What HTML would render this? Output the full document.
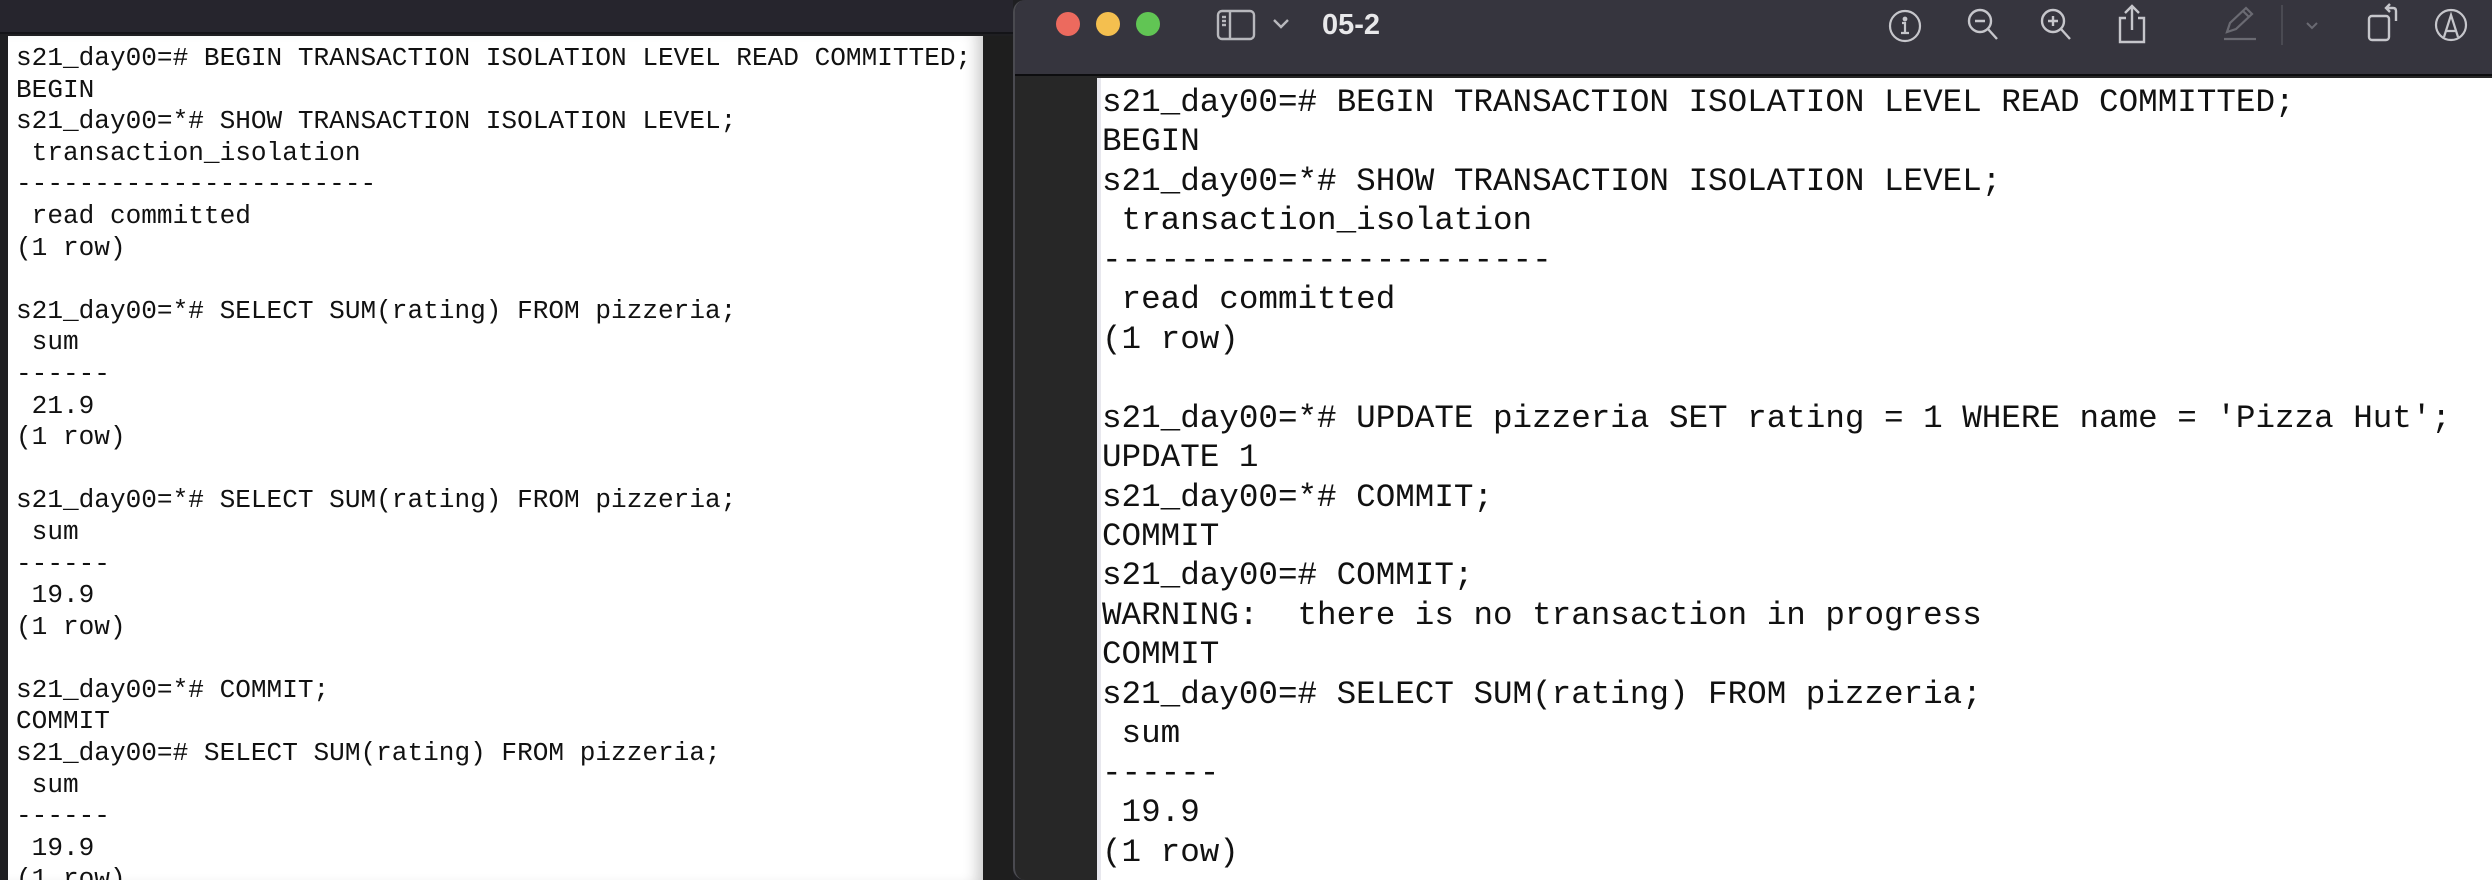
<!DOCTYPE html>
<html><head><meta charset="utf-8"><style>
*{margin:0;padding:0;box-sizing:border-box}
html,body{width:2492px;height:880px;overflow:hidden}
body{background:#1f1f22;position:relative;font-family:"Liberation Mono",monospace}
#ltop{position:absolute;left:0;top:0;width:1013px;height:34px;background:#26252d;border-bottom:2px solid #141418}
#lpan{position:absolute;left:8px;top:36px;width:975px;height:844px;background:#fff;box-shadow:inset -14px 0 14px -8px #ccc;overflow:hidden}
#lgap{position:absolute;left:983px;top:36px;width:30px;height:844px;background:#1e1e1e}
pre{font-family:"Liberation Mono",monospace;color:#111;white-space:pre}
#lt{position:absolute;left:8px;top:7px;font-size:26.1px;line-height:31.6px}
#win{position:absolute;left:1013px;top:0;width:1479px;height:880px;background:#272727;border-left:2px solid #4a4a50;border-radius:12px 0 0 12px;overflow:hidden}
#tb{position:absolute;left:0;top:0;width:100%;height:76px;background:#36353e;border-bottom:2px solid #0d0d0f}
#rpan{position:absolute;left:82px;top:78px;right:0;bottom:0;background:#fff;border-left:4px solid #e8e8ee;overflow:hidden}
#rt{position:absolute;left:1px;top:5px;font-size:32.6px;line-height:39.45px}
.dot{position:absolute;top:12px;width:24px;height:24px;border-radius:50%}
svg{position:absolute}
#title{position:absolute;left:307px;top:9px;font-family:"Liberation Sans",sans-serif;font-weight:bold;font-size:29px;color:#e8e8ea}
</style></head><body>
<div id="ltop"></div>
<div id="lpan"><pre id="lt">s21_day00=# BEGIN TRANSACTION ISOLATION LEVEL READ COMMITTED;
BEGIN
s21_day00=*# SHOW TRANSACTION ISOLATION LEVEL;
 transaction_isolation
-----------------------
 read committed
(1 row)

s21_day00=*# SELECT SUM(rating) FROM pizzeria;
 sum
------
 21.9
(1 row)

s21_day00=*# SELECT SUM(rating) FROM pizzeria;
 sum
------
 19.9
(1 row)

s21_day00=*# COMMIT;
COMMIT
s21_day00=# SELECT SUM(rating) FROM pizzeria;
 sum
------
 19.9
(1 row)</pre></div>
<div id="lgap"></div>
<div id="win">
 <div id="tb">
  <div class="dot" style="left:41px;background:#ec6a5e"></div>
  <div class="dot" style="left:81px;background:#f4bf4f"></div>
  <div class="dot" style="left:121px;background:#61c554"></div>
  <svg style="left:201px;top:9px" width="40" height="32" viewBox="0 0 40 32" fill="none" stroke="#b8b8bd" stroke-width="2.4"><rect x="2" y="2" width="36" height="28" rx="4"/><line x1="14" y1="2" x2="14" y2="30"/><line x1="6" y1="8" x2="10" y2="8"/><line x1="6" y1="12" x2="10" y2="12"/><line x1="6" y1="16" x2="10" y2="16"/></svg>
  <svg style="left:257px;top:18px" width="18" height="12" viewBox="0 0 18 12" fill="none" stroke="#b8b8bd" stroke-width="2.4"><path d="M2 2l7 7 7-7"/></svg>
  <div id="title">05-2</div>
  <svg style="left:873px;top:9px" width="34" height="34" viewBox="0 0 34 34" fill="none" stroke="#c6c6cb" stroke-width="2.2"><circle cx="17" cy="17" r="15"/><circle cx="17" cy="10" r="1.3" fill="#c6c6cb"/><path d="M14 14h3v10M13 24h8"/></svg>
  <svg style="left:952px;top:8px" width="34" height="36" viewBox="0 0 34 36" fill="none" stroke="#c6c6cb" stroke-width="2.4"><circle cx="13" cy="13" r="11"/><path d="M21 21l9 10M8 13h10"/></svg>
  <svg style="left:1025px;top:8px" width="34" height="36" viewBox="0 0 34 36" fill="none" stroke="#c6c6cb" stroke-width="2.4"><circle cx="13" cy="13" r="11"/><path d="M21 21l9 10M8 13h10M13 8v10"/></svg>
  <svg style="left:1102px;top:4px" width="30" height="40" viewBox="0 0 30 40" fill="none" stroke="#c6c6cb" stroke-width="2.4"><path d="M9 14H3v24h24V14h-6M15 26V2M8 9l7-7 7 7"/></svg>
  <svg style="left:1208px;top:5px" width="34" height="36" viewBox="0 0 34 36" fill="none" stroke="#6a6a72" stroke-width="2.2"><path d="M4 27l3-9 16-15 6 6-16 15z M20 6l6 6"/><line x1="1" y1="34" x2="33" y2="34"/></svg>
  <div style="position:absolute;left:1266px;top:5px;width:2px;height:40px;background:#4a4a52"></div>
  <svg style="left:1290px;top:21px" width="14" height="10" viewBox="0 0 14 10" fill="none" stroke="#6a6a72" stroke-width="2"><path d="M2 2l5 5 5-5"/></svg>
  <svg style="left:1351px;top:3px" width="36" height="40" viewBox="0 0 36 40" fill="none" stroke="#c6c6cb" stroke-width="2.4"><rect x="3" y="13" width="20" height="24" rx="3"/><path d="M30 18V8q0-3-3-3h-6M24 1l-4 4 4 4"/></svg>
  <svg style="left:1419px;top:8px" width="34" height="34" viewBox="0 0 34 34" fill="none" stroke="#c6c6cb" stroke-width="2.2"><circle cx="17" cy="17" r="15"/><path d="M10 29l7-22 7 22M12 23h10"/></svg>
 </div>
 <div id="rpan"><pre id="rt">s21_day00=# BEGIN TRANSACTION ISOLATION LEVEL READ COMMITTED;
BEGIN
s21_day00=*# SHOW TRANSACTION ISOLATION LEVEL;
 transaction_isolation
-----------------------
 read committed
(1 row)

s21_day00=*# UPDATE pizzeria SET rating = 1 WHERE name = 'Pizza Hut';
UPDATE 1
s21_day00=*# COMMIT;
COMMIT
s21_day00=# COMMIT;
WARNING:  there is no transaction in progress
COMMIT
s21_day00=# SELECT SUM(rating) FROM pizzeria;
 sum
------
 19.9
(1 row)</pre></div>
</div>
</body></html>
